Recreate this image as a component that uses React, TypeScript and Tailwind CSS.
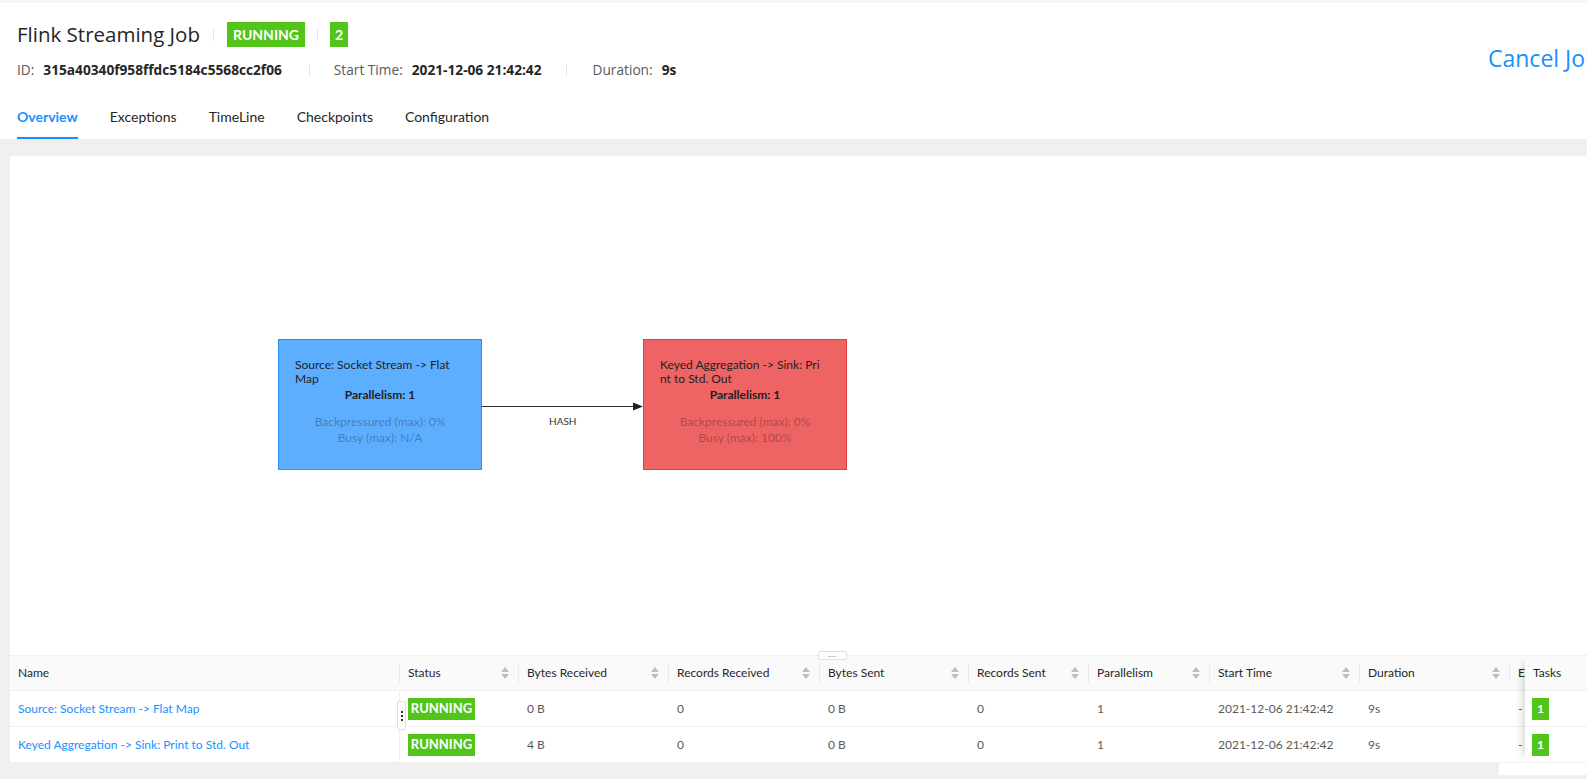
import React from "react";

type Col = { title: string; w: string; sort: boolean };

const cols: Col[] = [
  { title: "Name", w: "w-[390px]", sort: false },
  { title: "Status", w: "w-[119px]", sort: true },
  { title: "Bytes Received", w: "w-[150px]", sort: true },
  { title: "Records Received", w: "w-[151px]", sort: true },
  { title: "Bytes Sent", w: "w-[149px]", sort: true },
  { title: "Records Sent", w: "w-[120px]", sort: true },
  { title: "Parallelism", w: "w-[121px]", sort: true },
  { title: "Start Time", w: "w-[150px]", sort: true },
  { title: "Duration", w: "w-[150px]", sort: true },
  { title: "End Time", w: "w-[150px]", sort: true },
];

const rows = [
  {
    name: "Source: Socket Stream -> Flat Map",
    cells: ["0 B", "0", "0 B", "0", "1", "2021-12-06 21:42:42", "9s", "-"],
  },
  {
    name: "Keyed Aggregation -> Sink: Print to Std. Out",
    cells: ["4 B", "0", "0 B", "0", "1", "2021-12-06 21:42:42", "9s", "-"],
  },
];

function SortIcon() {
  return (
    <span className="flex flex-col items-center gap-[2px] text-[#bfbfbf]">
      <svg width="8" height="5" viewBox="0 0 8 5">
        <path d="M4 0L8 5H0z" fill="currentColor" />
      </svg>
      <svg width="8" height="5" viewBox="0 0 8 5">
        <path d="M0 0h8L4 5z" fill="currentColor" />
      </svg>
    </span>
  );
}

function Divider({ className }: { className: string }) {
  return <span className={`w-px bg-[#e8e8e8] ${className}`} />;
}

function Header() {
  return (
    <div className="bg-white border-t-[3px] border-[#f5f5f5]">
      <div className="flex">
        <div className="w-[1488px] shrink-0 pl-[17px] pt-[19px]">
          {/* title + tags */}
          <div className="flex items-center h-[25px]">
            <span className="font-['Open_Sans',sans-serif] text-[20.5px] leading-[25px] text-[#262626]">
              Flink Streaming Job
            </span>
            <Divider className="h-[12px] mx-[13px]" />
            <span className="flex items-center h-[25px] px-[6px] bg-[#52c41a] text-white text-[14px] font-bold">
              RUNNING
            </span>
            <Divider className="h-[12px] mx-[12px]" />
            <span className="flex items-center justify-center w-[18px] h-[25px] bg-[#52c41a] text-white text-[14px] font-bold">
              2
            </span>
          </div>
          {/* meta row */}
          <div className="flex items-center h-[20px] mt-[13px] font-['Open_Sans',sans-serif] text-[13.7px] text-[#262626]">
            <span className="text-[#595959] mr-[9px]">ID:</span>
            <span className="font-bold">315a40340f958ffdc5184c5568cc2f06</span>
            <Divider className="h-[13px] ml-[27px] mr-[24px]" />
            <span className="text-[#595959] mr-[9px]">Start Time:</span>
            <span className="font-bold">2021-12-06 21:42:42</span>
            <Divider className="h-[13px] ml-[24px] mr-[26px]" />
            <span className="text-[#595959] mr-[9px]">Duration:</span>
            <span className="font-bold">9s</span>
          </div>
        </div>
        <div className="pt-[40px] font-['Open_Sans',sans-serif] text-[23px] leading-[31px] text-[#1890ff] whitespace-nowrap">
          Cancel Job
        </div>
      </div>

      {/* tabs */}
      <div className="flex gap-[32px] pl-[17px] pt-[26px] text-[14px] leading-[22px]">
        <span className="pb-[9px] border-b-2 border-[#1890ff] text-[#1890ff] font-bold">Overview</span>
        <span className="pb-[9px] border-b-2 border-transparent text-[#262626]">Exceptions</span>
        <span className="pb-[9px] border-b-2 border-transparent text-[#262626]">TimeLine</span>
        <span className="pb-[9px] border-b-2 border-transparent text-[#262626]">Checkpoints</span>
        <span className="pb-[9px] border-b-2 border-transparent text-[#262626]">Configuration</span>
      </div>
    </div>
  );
}

function Graph() {
  return (
    <div className="relative h-[499px]">
      <svg className="absolute left-0 top-0" width="1644" height="499">
        <line x1="472" y1="250.5" x2="624" y2="250.5" stroke="#333" strokeWidth="1" />
        <path d="M633 250.5 L623 246.5 L623 254.5 Z" fill="#222" />
      </svg>
      <span className="absolute left-[539px] top-[259px] text-[10px] leading-[12px] text-[#333]">HASH</span>

      {/* source node */}
      <div className="absolute left-[268px] top-[183px] w-[204px] h-[131px] bg-[#5daeff] border border-[#2d8ff5] pt-[18px] text-[12px] text-[#1f1f1f]">
        <div className="pl-[16px] pr-[10px] leading-[14px]">
          Source: Socket Stream -&gt; Flat
          <br />
          Map
        </div>
        <div className="mt-[2px] text-center font-bold leading-[14px]">Parallelism: 1</div>
        <div className="mt-[12px] text-center leading-[16px] text-black/30">
          Backpressured (max): 0%
          <br />
          Busy (max): N/A
        </div>
      </div>

      {/* sink node */}
      <div className="absolute left-[633px] top-[183px] w-[204px] h-[131px] bg-[#ee6464] border border-[#e43b3b] pt-[18px] text-[12px] text-[#1f1f1f]">
        <div className="pl-[16px] pr-[10px] leading-[14px]">
          Keyed Aggregation -&gt; Sink: Pri
          <br />
          nt to Std. Out
        </div>
        <div className="mt-[2px] text-center font-bold leading-[14px]">Parallelism: 1</div>
        <div className="mt-[12px] text-center leading-[16px] text-black/30">
          Backpressured (max): 0%
          <br />
          Busy (max): 100%
        </div>
      </div>
    </div>
  );
}

function VertexTable() {
  return (
    <div className="relative flex border-t border-[#f0f0f0] text-[12px]">
      {/* split handle */}
      <div className="absolute left-[808px] top-[-5px] w-[29px] h-[9px] bg-white border border-[#e0e0e0] rounded-[2px] flex items-center justify-center z-20">
        <span className="text-[8px] leading-[6px] text-[#595959] tracking-[1px] pb-[3px]">...</span>
      </div>
      {/* column resize handle */}
      <div className="absolute left-[387px] top-[45px] w-[9px] h-[29px] bg-white border border-[#e0e0e0] rounded-[2px] flex flex-col items-center justify-center gap-[2px] z-20">
        <span className="w-[2px] h-[2px] bg-[#333]" />
        <span className="w-[2px] h-[2px] bg-[#333]" />
        <span className="w-[2px] h-[2px] bg-[#333]" />
      </div>

      {/* scrolling part */}
      <div className="w-[1515px] shrink-0 overflow-hidden">
        <div className="flex w-[1650px] h-[35px] bg-[#fafafa] border-b border-[#f0f0f0] text-[#262626]">
          {cols.map((c) => (
            <div key={c.title} className={`${c.w} shrink-0 relative flex items-center justify-between pl-[8px] pr-[10px]`}>
              <span className="whitespace-nowrap">{c.title}</span>
              {c.sort && <SortIcon />}
              <span className="absolute right-0 top-[8px] h-[19px] w-px bg-black/[0.06]" />
            </div>
          ))}
        </div>
        {rows.map((r) => (
          <div key={r.name} className="flex w-[1650px] h-[36px] border-b border-[#f0f0f0] text-[#595959]">
            <div className="w-[390px] shrink-0 flex items-center pl-[8px] border-r border-[#f0f0f0] text-[#1890ff]">
              {r.name}
            </div>
            <div className="w-[119px] shrink-0 flex items-center pl-[8px]">
              <span className="flex items-center justify-center w-[67px] h-[22px] bg-[#52c41a] text-white text-[13px] font-bold">
                RUNNING
              </span>
            </div>
            {r.cells.map((v, i) => (
              <div key={i} className={`${cols[i + 2].w} shrink-0 flex items-center pl-[8px] whitespace-nowrap`}>
                {v}
              </div>
            ))}
          </div>
        ))}
      </div>

      {/* fixed tasks column */}
      <div className="w-[130px] shrink-0 relative z-10 bg-white shadow-[-10px_0_8px_-8px_rgba(0,0,0,0.18)]">
        <div className="h-[35px] flex items-center pl-[8px] bg-[#fafafa] border-b border-[#f0f0f0] text-[#262626]">
          Tasks
        </div>
        {rows.map((r) => (
          <div key={r.name} className="h-[36px] flex items-center pl-[7px] border-b border-[#f0f0f0]">
            <span className="flex items-center justify-center w-[17px] h-[22px] bg-[#52c41a] text-white font-bold text-[12px]">
              1
            </span>
          </div>
        ))}
      </div>
    </div>
  );
}

export default function App() {
  return (
    <div className="w-[1587px] h-[779px] overflow-hidden bg-[#f0f0f0] font-['Lato','Noto_Sans',sans-serif]">
      <div className="w-[1700px]">
        <Header />
        <div className="pl-[10px] pt-[17px]">
          <div className="w-[1644px] bg-white">
            <Graph />
            <VertexTable />
          </div>
          <div className="ml-[1489px] w-[100px] h-[12px] bg-white" />
        </div>
      </div>
    </div>
  );
}
